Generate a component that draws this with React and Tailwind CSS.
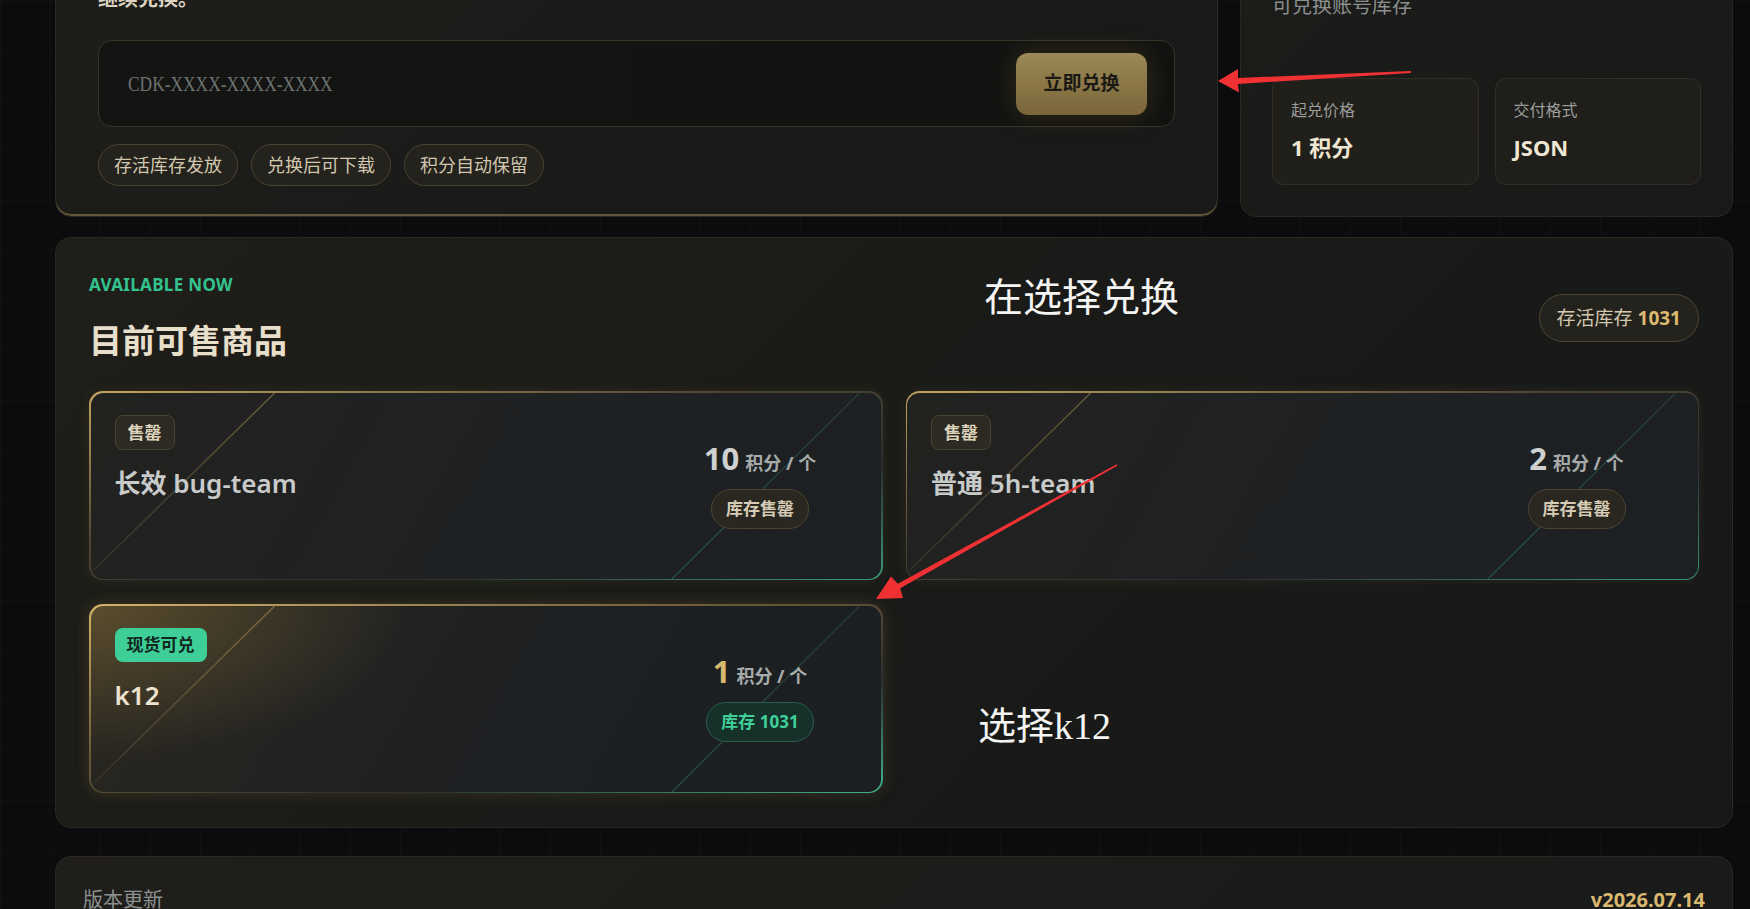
import { useId } from "react";

const products = [
  { name: "长效 bug-team", price: 10, live: false },
  { name: "普通 5h-team", price: 2, live: false },
  { name: "k12", price: 1, live: true, stock: 1031 },
];

const font = "font-['Noto_Sans','Noto_Sans_CJK_SC',sans-serif]";

function CardLines() {
  const id = useId();
  return (
    <svg
      className="pointer-events-none absolute inset-0 h-full w-full"
      viewBox="0 0 792 186"
      preserveAspectRatio="none"
    >
      <defs>
        <linearGradient id={`${id}g`} x1="0" y1="1" x2="1" y2="0">
          <stop offset="0" stopColor="#c9a962" stopOpacity="0.12" />
          <stop offset="1" stopColor="#c9a962" stopOpacity="0.45" />
        </linearGradient>
        <linearGradient id={`${id}t`} x1="0" y1="1" x2="1" y2="0">
          <stop offset="0" stopColor="#3aa884" stopOpacity="0.35" />
          <stop offset="1" stopColor="#3aa884" stopOpacity="0.2" />
        </linearGradient>
      </defs>
      <line x1="3" y1="177" x2="184" y2="0" stroke={`url(#${id}g)`} strokeWidth="1.3" />
      <line x1="582" y1="186" x2="770" y2="0" stroke={`url(#${id}t)`} strokeWidth="1.3" />
    </svg>
  );
}

function ProductCard({ item }) {
  return (
    <div
      className={
        item.live
          ? "rounded-[14px] p-[1.5px] bg-[linear-gradient(to_bottom_right,#d4b36a,#6b5a38_40%,#2b2e2c_70%,#3fb58c)] shadow-[0_0_16px_rgba(200,165,90,0.18)]"
          : "rounded-[14px] p-[1.5px] bg-[linear-gradient(to_bottom_right,#c4a562,#4e4533_40%,#2a2d2c_70%,#3a9c7a)] shadow-[0_0_12px_rgba(200,165,90,0.1)]"
      }
    >
      <div
        className={
          item.live
            ? "relative flex h-[186px] justify-between overflow-hidden rounded-[12.5px] bg-[radial-gradient(ellipse_460px_220px_at_0%_0%,rgba(150,122,62,0.45),transparent_70%),linear-gradient(120deg,#2a2720_0%,#1e2022_50%,#1b1f22_100%)] pl-[24px] pr-[51px] pt-[22px]"
            : "relative flex h-[186px] justify-between overflow-hidden rounded-[12.5px] bg-[linear-gradient(120deg,#22221f_0%,#1f2123_45%,#1d2022_100%)] pl-[24px] pr-[51px] pt-[22px]"
        }
      >
        <CardLines />
        <div className="relative flex flex-col items-start">
          {item.live ? (
            <span className="rounded-[8px] bg-[#3ecf98] px-[12px] py-[4px] text-[17px] font-bold leading-[26px] text-[#10281f]">
              现货可兑
            </span>
          ) : (
            <span className="rounded-[8px] border border-[#4a4332] bg-[#2c2a23] px-[12px] py-[3px] text-[17px] font-bold leading-[27px] text-[#ddd3bb]">
              售罄
            </span>
          )}
          <div
            className={
              item.live
                ? "mt-[15px] text-[26px] font-semibold leading-[36px] text-[#ece3cf]"
                : "mt-[15px] text-[26px] font-semibold leading-[36px] text-[#c9cbcb]"
            }
          >
            {item.name}
          </div>
        </div>
        <div className="relative -mt-[24px] flex w-[140px] flex-col items-center self-center">
          <div className="flex items-baseline">
            <span
              className={
                item.live
                  ? "text-[31px] font-bold leading-[36px] text-[#d8b86e]"
                  : "text-[31px] font-bold leading-[36px] text-[#cfd1d0]"
              }
            >
              {item.price}
            </span>
            <span className="ml-[6px] text-[18px] font-bold text-[#a7abab]">积分 / 个</span>
          </div>
          {item.live ? (
            <span className="mt-[12px] rounded-full border border-[#2b5f4c] bg-[#16302a] px-[14px] text-[17px] font-bold leading-[38px] text-[#3fcf98]">
              库存 {item.stock}
            </span>
          ) : (
            <span className="mt-[12px] rounded-full border border-[#4d4532] bg-[#29271f] px-[14px] text-[17px] font-bold leading-[38px] text-[#d6ccb5]">
              库存售罄
            </span>
          )}
        </div>
      </div>
    </div>
  );
}

function Arrows() {
  return (
    <svg
      className="pointer-events-none absolute left-0 top-0 z-20"
      width="1750"
      height="909"
      viewBox="0 0 1750 909"
    >
      <polygon
        fill="#ef3134"
        points="1218,81 1239,92.5 1238,84 1411,73 1411,71 1238,78 1238,69"
      />
      <polygon
        fill="#ef3134"
        points="876,599 903,598 900.2,588.2 1117.4,465.7 1116.6,464.3 897.8,583.8 891,576.5"
      />
    </svg>
  );
}

export default function App() {
  return (
    <div
      className={`relative h-[909px] overflow-hidden bg-[#0b0c0e] bg-[linear-gradient(rgba(255,255,255,0.018)_1px,transparent_1px),linear-gradient(90deg,rgba(255,255,255,0.018)_1px,transparent_1px)] bg-size-[50px_50px] ${font}`}
    >
      <div className="pl-[55px] pr-[17px]">
        {/* redeem box + stock summary */}
        <div className="-mt-[46px] grid grid-cols-[1163px_1fr] gap-[22px]">
          <div className="flex flex-col rounded-[16px] border border-[#2c2920] bg-[linear-gradient(135deg,#1e1d1a_0%,#1a1b19_50%,#171a19_100%)] px-[42px] pb-[30px] pt-[30px] shadow-[inset_0_-2px_0_rgba(160,135,80,0.55)]">
            <p className="text-[20px] font-bold leading-[28px] text-[#dcd4c1]">继续兑换。</p>
            <div className="mt-[27px] flex h-[87px] items-center justify-between rounded-[14px] border border-[#3a3426] bg-[linear-gradient(90deg,#141513,#111311)] pl-[29px] pr-[27px]">
              <span className="inline-block origin-left scale-x-[0.79] font-['Liberation_Serif',serif] text-[22px] text-[#6d7472]">
                CDK-XXXX-XXXX-XXXX
              </span>
              <button className="h-[62px] w-[131px] rounded-[12px] bg-[linear-gradient(180deg,#9b8857,#7a6638)] text-[19px] font-bold text-[#1b1913] shadow-[0_0_26px_rgba(150,120,55,0.25)]">
                立即兑换
              </button>
            </div>
            <div className="mt-[17px] flex gap-[13px]">
              {["存活库存发放", "兑换后可下载", "积分自动保留"].map((t) => (
                <span
                  key={t}
                  className="rounded-full border border-[#4a4230] bg-[#24221d] px-[15px] text-[18px] leading-[40px] text-[#d1c7ae]"
                >
                  {t}
                </span>
              ))}
            </div>
          </div>

          <div className="flex flex-col rounded-[16px] border border-[#2a271f] bg-[linear-gradient(135deg,#1c1c19,#171a19)] px-[31px] pb-[31px] pt-[37px]">
            <p className="text-[20px] leading-[28px] text-[#8a8f8e]">可兑换账号库存</p>
            <div className="mt-auto grid grid-cols-2 gap-[16px]">
              <div className="h-[107px] rounded-[11px] border border-[#322e24] bg-[#211f1a] px-[18px] pt-[20px]">
                <div className="text-[16px] leading-[22px] text-[#9a9d9a]">起兑价格</div>
                <div className="mt-[12px] text-[22px] font-bold leading-[28px] text-[#efe6d2]">1 积分</div>
              </div>
              <div className="h-[107px] rounded-[11px] border border-[#322e24] bg-[#1f1e1a] px-[18px] pt-[20px]">
                <div className="text-[16px] leading-[22px] text-[#9a9d9a]">交付格式</div>
                <div className="mt-[12px] text-[22px] font-bold leading-[28px] text-[#efe6d2]">JSON</div>
              </div>
            </div>
          </div>
        </div>

        {/* product list */}
        <section className="mt-[20px] rounded-[16px] border border-[#2a281f] bg-[linear-gradient(135deg,#1f1e19_0%,#1a1b18_45%,#161818_100%)] px-[33px] pb-[34px] pt-[36px]">
          <div className="flex items-center justify-between">
            <div>
              <div className="text-[17px] font-bold leading-[22px] tracking-[0.02em] text-[#34c28e]">
                AVAILABLE NOW
              </div>
              <h2 className="mt-[25px] text-[33px] font-bold leading-[40px] text-[#e8dfca]">目前可售商品</h2>
            </div>
            <span className="rounded-full border border-[#4e4532] bg-[#24221c] px-[17px] text-[19px] leading-[46px] text-[#d3c9b1]">
              存活库存 <b className="text-[#dcb96f]">1031</b>
            </span>
          </div>
          <div className="mt-[30px] grid grid-cols-2 gap-x-[23px] gap-y-[24px]">
            {products.map((p) => (
              <ProductCard key={p.name} item={p} />
            ))}
          </div>
        </section>

        {/* release notes */}
        <section className="mt-[28px] flex h-[120px] items-start justify-between rounded-[16px] border border-[#2a281f] bg-[linear-gradient(135deg,#1f1e1a,#191b1a)] px-[27px] pt-[29px]">
          <span className="text-[20px] leading-[28px] text-[#8c9191]">版本更新</span>
          <span className="text-[20px] font-bold leading-[28px] text-[#d9b870]">v2026.07.14</span>
        </section>
      </div>

      <div className="absolute left-[984px] top-[276px] z-20 text-[39px] leading-[40px] text-[#f4f4f2]">
        在选择兑换
      </div>
      <div className="absolute left-[978px] top-[705px] z-20 font-['Liberation_Serif','Noto_Sans_CJK_SC',serif] text-[38px] leading-[42px] text-[#f4f4f2]">
        选择k12
      </div>
      <Arrows />
    </div>
  );
}
